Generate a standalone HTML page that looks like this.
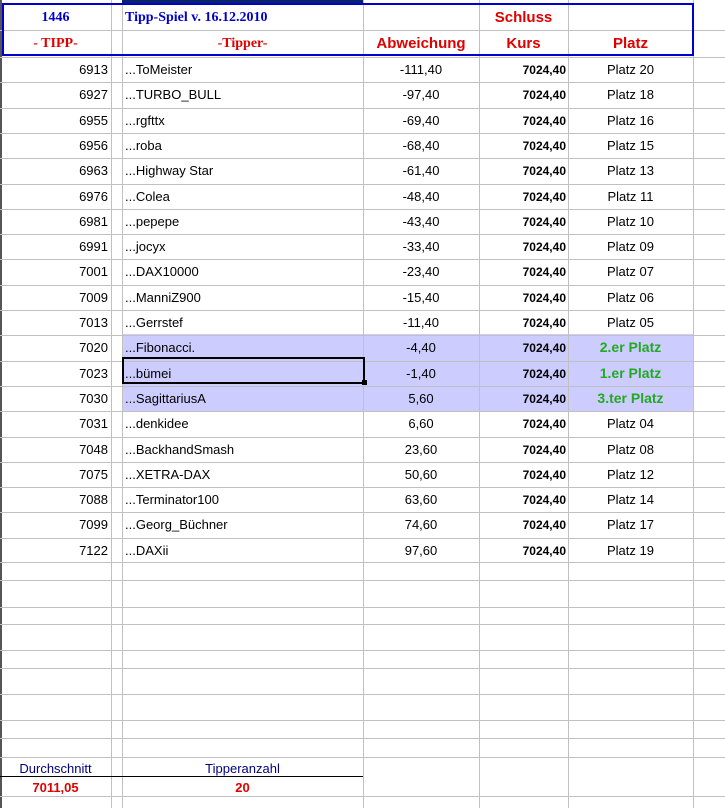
<!DOCTYPE html>
<html><head><meta charset="utf-8"><style>
body{margin:0;width:725px;height:808px;background:#fff;position:relative;overflow:hidden;font-family:"Liberation Sans",sans-serif;font-size:13px;color:#000}
.h{position:absolute;left:0;width:725px;height:1px;background:#c0c0c0}
.v{position:absolute;top:0;height:808px;width:1px;background:#c0c0c0}
.t{position:absolute;white-space:nowrap}
.r{text-align:right}
.c{text-align:center}
.hl{position:absolute;left:122px;width:571px;background:#ccccff}
</style></head><body>
<div class="hl" style="top:334px;height:77px"></div>
<div class="v" style="left:111px"></div><div class="v" style="left:122px"></div><div class="v" style="left:363px"></div><div class="v" style="left:479px"></div><div class="v" style="left:568px"></div><div class="v" style="left:693px"></div>
<div style="position:absolute;left:0;top:0;width:2px;height:808px;background:#555"></div>
<div style="position:absolute;left:122px;top:0;width:241px;height:3px;background:#0a246a"></div>
<div class="h" style="top:30px"></div>
<div id="rows"></div>
<div style="position:absolute;left:2px;top:3px;width:688px;height:49px;border:2px solid #0000cc"></div>
<div class="t c" style="left:0;width:111px;top:10px;font:bold 14px 'Liberation Serif',serif;color:#0000cc">1446</div>
<div class="t" style="left:125px;top:10px;font:bold 14px 'Liberation Serif',serif;color:#0000cc">Tipp-Spiel v. 16.12.2010</div>
<div class="t c" style="left:479px;width:89px;top:9px;font:bold 15px 'Liberation Sans',sans-serif;color:#e00000">Schluss</div>
<div class="t c" style="left:0;width:111px;top:36px;font:bold 14px 'Liberation Serif',serif;color:#e00000">- TIPP-</div>
<div class="t c" style="left:122px;width:241px;top:36px;font:bold 14px 'Liberation Serif',serif;color:#e00000">-Tipper-</div>
<div class="t c" style="left:363px;width:116px;top:35px;font:bold 15px 'Liberation Sans',sans-serif;color:#e00000">Abweichung</div>
<div class="t c" style="left:479px;width:89px;top:35px;font:bold 15px 'Liberation Sans',sans-serif;color:#e00000">Kurs</div>
<div class="t c" style="left:568px;width:125px;top:35px;font:bold 15px 'Liberation Sans',sans-serif;color:#e00000">Platz</div>
<div style="position:absolute;left:122px;top:357px;width:239px;height:23px;border:2px solid #000"></div>
<div style="position:absolute;left:362px;top:380px;width:5px;height:5px;background:#000"></div>
<div style="position:absolute;left:0;top:776px;width:363px;height:1px;background:#000"></div>
<div class="t c" style="left:0;width:111px;top:761px;color:#000080">Durchschnitt</div>
<div class="t c" style="left:122px;width:241px;top:761px;color:#000080">Tipperanzahl</div>
<div class="t c" style="left:0;width:111px;top:780px;font-weight:bold;color:#e00000">7011,05</div>
<div class="t c" style="left:122px;width:241px;top:780px;font-weight:bold;color:#e00000">20</div>
<script>
var d=[["6913","ToMeister","-111,40","Platz 20"],["6927","TURBO_BULL","-97,40","Platz 18"],["6955","rgfttx","-69,40","Platz 16"],["6956","roba","-68,40","Platz 15"],["6963","Highway Star","-61,40","Platz 13"],["6976","Colea","-48,40","Platz 11"],["6981","pepepe","-43,40","Platz 10"],["6991","jocyx","-33,40","Platz 09"],["7001","DAX10000","-23,40","Platz 07"],["7009","ManniZ900","-15,40","Platz 06"],["7013","Gerrstef","-11,40","Platz 05"],["7020","Fibonacci.","-4,40","2.er Platz"],["7023","bümei","-1,40","1.er Platz"],["7030","SagittariusA","5,60","3.ter Platz"],["7031","denkidee","6,60","Platz 04"],["7048","BackhandSmash","23,60","Platz 08"],["7075","XETRA-DAX","50,60","Platz 12"],["7088","Terminator100","63,60","Platz 14"],["7099","Georg_Büchner","74,60","Platz 17"],["7122","DAXii","97,60","Platz 19"]];
var h="";
for(var i=0;i<20;i++){var y=57+i*25.3,ty=y+5;var r=d[i];
h+='<div class="h" style="top:'+Math.round(y)+'px"></div>';
h+='<div class="t r" style="left:0;width:108px;top:'+ty+'px">'+r[0]+'</div>';
h+='<div class="t" style="left:125px;top:'+ty+'px">...'+r[1]+'</div>';
h+='<div class="t c" style="left:363px;width:116px;top:'+ty+'px">'+r[2]+'</div>';
h+='<div class="t r" style="left:479px;width:87px;top:'+(ty+1)+'px;font-weight:bold;font-size:12px">7024,40</div>';
var g=(i>=11&&i<=13);
h+='<div class="t c" style="left:568px;width:125px;top:'+(g?ty-1:ty)+'px;'+(g?'font-weight:bold;font-size:14px;color:#22aa22':'')+'">'+r[3]+'</div>';}
[562,580,607,624,650,668,694,720,738,757,796].forEach(function(y){h+='<div class="h" style="top:'+y+'px"></div>';});
document.getElementById("rows").innerHTML=h;
</script>
</body></html>
